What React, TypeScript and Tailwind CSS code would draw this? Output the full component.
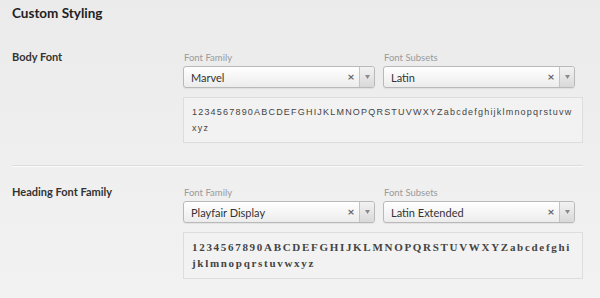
import React from 'react';

interface FontRowProps {
  title: string;
  family: string;
  subset: string;
  sample: React.ReactNode;
}

const Select: React.FC<{ value: string }> = ({ value }) => (
  <div className="flex h-[22px] w-[192px] items-stretch rounded-[3px] border border-[#b9b9b9] bg-gradient-to-b from-white to-[#ececec] shadow-[0_1px_1px_rgba(0,0,0,0.06)]">
    <div className="flex flex-1 items-center pl-[7px] text-[11px] leading-none text-[#333]">{value}</div>
    <div className="flex w-[16px] items-center justify-center text-[12px] font-bold leading-none text-[#666]">×</div>
    <div className="flex w-[15px] items-center justify-center rounded-r-[3px] border-l border-[#c4c4c4] bg-gradient-to-b from-[#f2f2f2] to-[#d9d9d9]">
      <svg width="5" height="4" viewBox="0 0 5 4">
        <path d="M0 0 H5 L2.5 4 Z" fill="#8a8a8a" />
      </svg>
    </div>
  </div>
);

const FontRow: React.FC<FontRowProps> = ({ title, family, subset, sample }) => (
  <div className="flex">
    <div className="w-[171px] text-[11px] font-bold leading-[12px] text-[#333]">{title}</div>
    <div className="flex flex-col">
      <div className="flex gap-[8px]">
        <div className="flex flex-col">
          <div className="mb-[1px] pl-[1px] text-[9.5px] leading-[14px] text-[#9a9a9a]">Font Family</div>
          <Select value={family} />
        </div>
        <div className="flex flex-col">
          <div className="mb-[1px] pl-[1px] text-[9.5px] leading-[14px] text-[#9a9a9a]">Font Subsets</div>
          <Select value={subset} />
        </div>
      </div>
      <div className="mt-[9px] w-[400px] overflow-hidden border border-[#dddddd] bg-[#f2f2f2] px-[8px]">{sample}</div>
    </div>
  </div>
);

export default function App() {
  return (
    <div
      className="h-[298px] w-[600px] overflow-hidden bg-gradient-to-b from-[#ebebeb] to-[#f2f2f2] pl-[12px] pr-[17px]"
      style={{ fontFamily: 'Lato, "Open Sans", sans-serif' }}
    >
      <h2 className="pt-[3px] text-[13.5px] font-bold leading-[20px] text-[#222]">Custom Styling</h2>
      <div className="pt-[28px] pb-[22px]">
        <FontRow
          title="Body Font"
          family="Marvel"
          subset="Latin"
          sample={
            <div
              className="h-[44px] pt-[6px] text-[9px] leading-[16px] tracking-[1.2px] text-[#444]"
              style={{ fontFamily: '"Liberation Sans", Arial, sans-serif' }}
            >
              <div className="whitespace-nowrap">1234567890ABCDEFGHIJKLMNOPQRSTUVWXYZabcdefghijklmnopqrstuvw</div>
              <div>xyz</div>
            </div>
          }
        />
      </div>
      <div className="h-[2px] border-t border-[#dcdcdc] bg-white/70" />
      <div className="pt-[19px]">
        <FontRow
          title="Heading Font Family"
          family="Playfair Display"
          subset="Latin Extended"
          sample={
            <div
              className="h-[45px] pt-[6px] text-[11px] font-bold leading-[16px] tracking-[1.7px] text-[#444]"
              style={{ fontFamily: '"Liberation Serif", "DejaVu Serif", serif' }}
            >
              <div className="whitespace-nowrap">1234567890ABCDEFGHIJKLMNOPQRSTUVWXYZabcdefghi</div>
              <div>jklmnopqrstuvwxyz</div>
            </div>
          }
        />
      </div>
    </div>
  );
}
